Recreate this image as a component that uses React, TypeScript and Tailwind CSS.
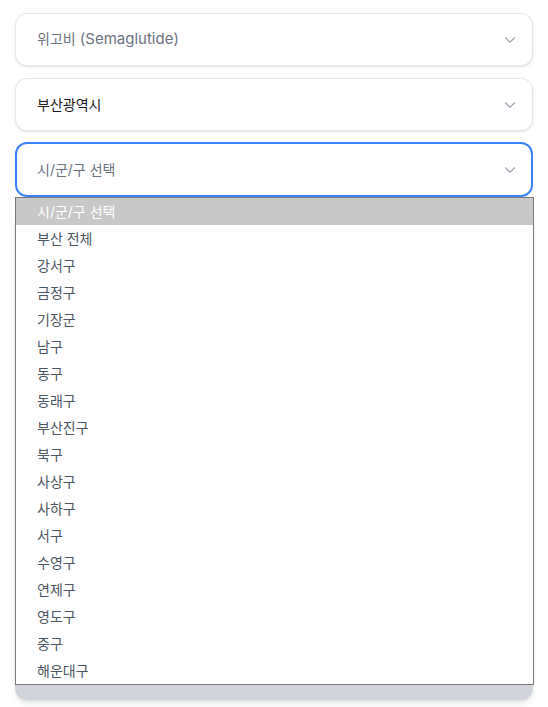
import type { ReactNode } from "react";
import { ChevronDown } from "lucide-react";

const districts = [
  "시/군/구 선택",
  "부산 전체",
  "강서구",
  "금정구",
  "기장군",
  "남구",
  "동구",
  "동래구",
  "부산진구",
  "북구",
  "사상구",
  "사하구",
  "서구",
  "수영구",
  "연제구",
  "영도구",
  "중구",
  "해운대구",
];

const font = {
  fontFamily: '"Inter", "Noto Sans CJK KR", sans-serif',
};

function SelectBox({
  label,
  muted,
  focused,
}: {
  label: ReactNode;
  muted?: boolean;
  focused?: boolean;
}) {
  return (
    <div
      className={
        focused
          ? "flex h-[55px] items-center justify-between rounded-xl border-2 border-[#3b82f6] bg-white pl-[20px] pr-[12px]"
          : "flex h-[53px] items-center justify-between rounded-xl border border-[#e5e7eb] bg-white pl-[21px] pr-[13px] shadow-sm"
      }
    >
      <span
        className={
          muted
            ? "text-[14px] font-normal text-[#6b7280]"
            : "text-[14px] font-normal text-[#1a1a1a]"
        }
      >
        {label}
      </span>
      <ChevronDown className="h-[18px] w-[18px] text-[#9ca3af]" strokeWidth={1.5} />
    </div>
  );
}

export default function App() {
  return (
    <div className="min-h-[707px] bg-white px-[15px] pt-[13px]" style={font}>
      <div className="flex flex-col gap-[12px]">
        <SelectBox
          label={
            <>
              위고비<span className="text-[15px]"> (Semaglutide)</span>
            </>
          }
          muted
        />
        <SelectBox label="부산광역시" />
        <div className="relative -mt-[1px]">
          <SelectBox label="시/군/구 선택" muted focused />

          {/* button sitting under the open list */}
          <div className="mt-[14px] h-[489px] rounded-xl bg-[#d1d5db] shadow-md" />

          {/* native option list, open */}
          <ul className="absolute left-0 right-[-1px] top-[55px] border border-[#7a7a7a] bg-white">
            {districts.map((d, i) => (
              <li
                key={d}
                className={
                  i === 0
                    ? "flex h-[27px] items-center bg-[#c8c8c8] pl-[21px] text-[14px] text-white"
                    : "flex h-[27px] items-center pl-[21px] text-[14px] text-[#4b5563]"
                }
              >
                {d}
              </li>
            ))}
          </ul>
        </div>
      </div>
    </div>
  );
}
